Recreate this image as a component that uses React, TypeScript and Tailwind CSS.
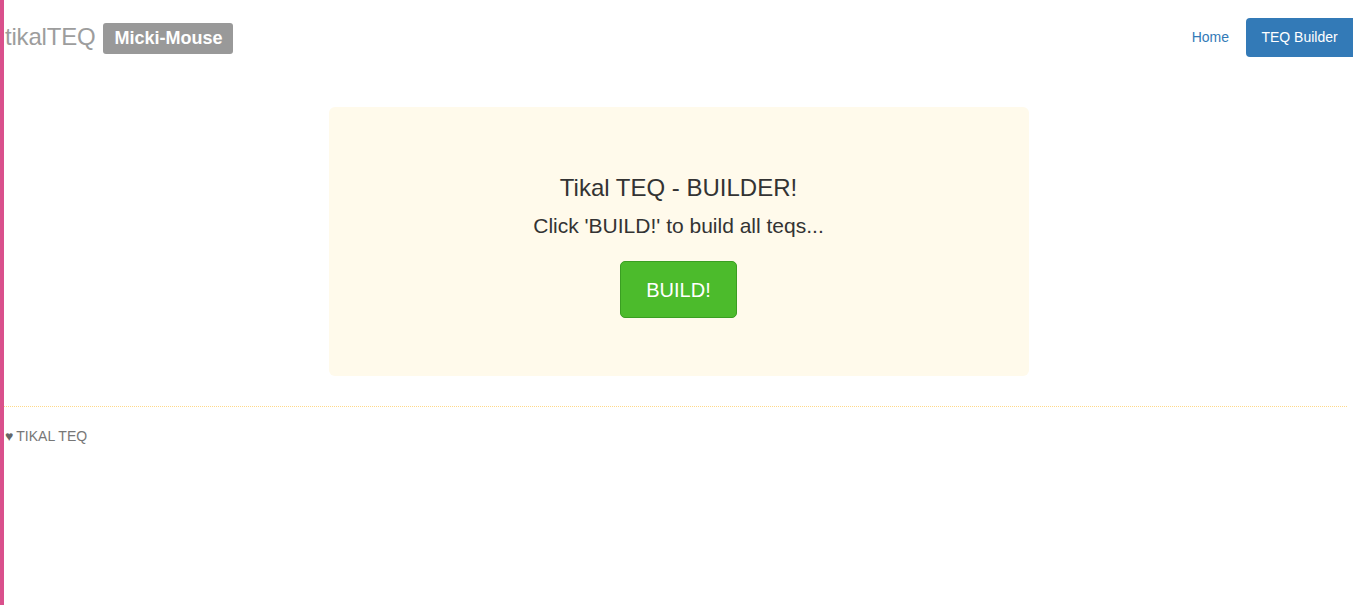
export default function App() {
  return (
    <div className="min-h-[605px] bg-white flex font-['Liberation_Sans',Arial,sans-serif]">
      {/* left accent bar */}
      <div className="w-[4px] shrink-0 bg-[#d9508c]"></div>

      <div className="flex-1 flex flex-col">
        {/* Navbar */}
        <div className="h-[76px] flex items-center justify-between pl-[1px]">
          <div className="flex items-center gap-[8px] -mt-[2px]">
            <span className="text-[24px] text-[#9d9d9d] tracking-[-0.2px]">tikalTEQ</span>
            <span className="bg-[#999999] text-white font-bold text-[18px] leading-none rounded-[3px] px-[11px] pt-[6px] pb-[7px] mt-[2px]">
              Micki-Mouse
            </span>
          </div>
          <div className="flex items-center gap-[17px] -mt-[1px]">
            <a className="text-[14px] text-[#337ab7] ml-[1px]">Home</a>
            <button className="bg-[#337ab7] text-white text-[14px] rounded-l-[4px] w-[107px] h-[39px]">
              TEQ Builder
            </button>
          </div>
        </div>

        {/* Jumbotron */}
        <div className="flex justify-center mt-[31px]">
          <div className="w-[700px] h-[269px] bg-[#fffaeb] rounded-[6px] flex flex-col items-center pt-[67px]">
            <h1 className="text-[24px] text-[#333] leading-[28px]">Tikal TEQ - BUILDER!</h1>
            <p className="text-[21px] text-[#333] leading-[24px] mt-[12px]">Click 'BUILD!' to build all teqs...</p>
            <button className="mt-[23px] w-[117px] h-[57px] bg-[#4cbb2c] border border-[#3a9e22] rounded-[5px] text-white text-[20px]">
              BUILD!
            </button>
          </div>
        </div>

        {/* Footer */}
        <div className="mt-[30px] mr-[6px] border-t border-dotted border-[#ffd98a]"></div>
        <div className="mt-[19px] pl-[1px] text-[14px] text-[#777] flex items-center gap-[3px]">
          <span className="text-[14px] text-[#666]">♥</span>
          <span>TIKAL TEQ</span>
        </div>
      </div>
    </div>
  );
}
